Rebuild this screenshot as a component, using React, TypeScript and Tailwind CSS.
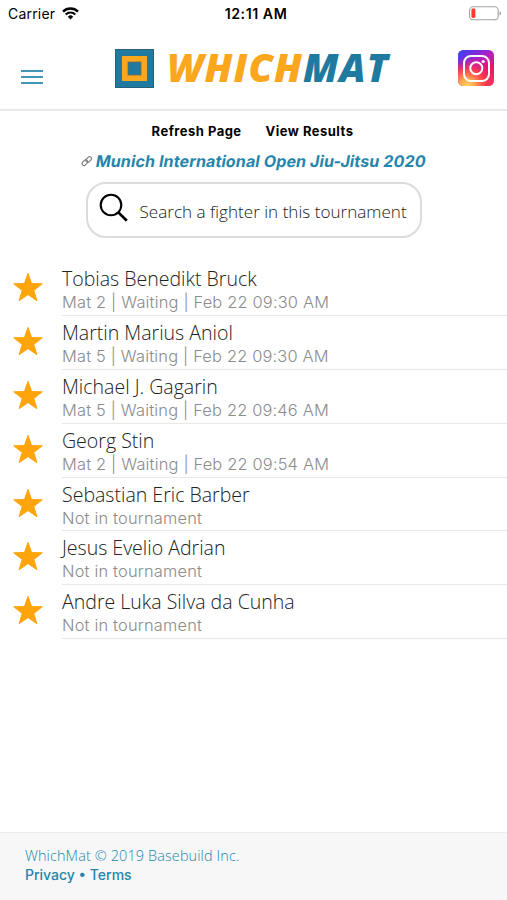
import { clsx } from "clsx";

interface Fighter {
  name: string;
  status: string;
}

const fighters: Fighter[] = [
  { name: "Tobias Benedikt Bruck", status: "Mat 2 | Waiting | Feb 22 09:30 AM" },
  { name: "Martin Marius Aniol", status: "Mat 5 | Waiting | Feb 22 09:30 AM" },
  { name: "Michael J. Gagarin", status: "Mat 5 | Waiting | Feb 22 09:46 AM" },
  { name: "Georg Stin", status: "Mat 2 | Waiting | Feb 22 09:54 AM" },
  { name: "Sebastian Eric Barber", status: "Not in tournament" },
  { name: "Jesus Evelio Adrian", status: "Not in tournament" },
  { name: "Andre Luka Silva da Cunha", status: "Not in tournament" },
];

const inter = "font-['Inter',sans-serif]";
const openSans = "font-['Open_Sans',sans-serif]";

function WifiIcon() {
  return (
    <svg className="ml-[7px] h-[13px] w-[17px]" viewBox="0 0 17 13" fill="none">
      <path d="M1 4.6a10.6 10.6 0 0 1 15 0" stroke="#000" strokeWidth="2.3" />
      <path d="M3.7 7.5a6.8 6.8 0 0 1 9.6 0" stroke="#000" strokeWidth="2.1" />
      <path d="M8.5 12.4 5.8 9.7a3.8 3.8 0 0 1 5.4 0Z" fill="#000" />
    </svg>
  );
}

function BatteryIcon() {
  return (
    <svg className="h-[15px] w-[33px]" viewBox="0 0 33 15" fill="none">
      <rect x="0.6" y="0.8" width="28.6" height="13" rx="3.6" stroke="#a3a3a3" strokeWidth="1.1" />
      <rect x="2.4" y="2.6" width="4" height="9.4" rx="1.4" fill="#fb3b30" />
      <path d="M30.6 5.2v4.2c.9-.3 1.5-1.1 1.5-2.1s-.6-1.8-1.5-2.1Z" fill="#999" />
    </svg>
  );
}

function StatusBar() {
  return (
    <div className={clsx(inter, "flex h-[27px] items-center pr-[5px] pl-2 text-black")}>
      <div className="flex flex-1 items-center">
        <span className="text-[14px] tracking-[0.2px]">Carrier</span>
        <WifiIcon />
      </div>
      <span className="pl-[2px] text-[14.2px] font-semibold tracking-[0.55px]">12:11 AM</span>
      <div className="flex flex-1 justify-end">
        <BatteryIcon />
      </div>
    </div>
  );
}

function Logo() {
  return (
    <div className="flex items-center">
      <svg className="h-[39px] w-[39px]" viewBox="0 0 39 39">
        <rect x="0.5" y="0.5" width="38" height="38" fill="#20799e" stroke="#28617a" />
        <rect x="7" y="7" width="25" height="25" fill="#faa71e" />
        <rect x="13" y="13" width="13" height="13" fill="#20799e" stroke="#786b44" strokeWidth="0.8" />
      </svg>
      <span
        className={clsx(
          openSans,
          "-mt-[3px] ml-[13px] text-[39px] leading-[39px] font-extrabold whitespace-nowrap italic",
        )}
      >
        <span className="tracking-[1.1px] text-[#faa71e]">WHICH</span>
        <span className="tracking-[0.8px] text-[#20799e]">MAT</span>
      </span>
    </div>
  );
}

function InstagramIcon() {
  return (
    <svg className="h-[36px] w-[36px]" viewBox="0 0 36 36" fill="none">
      <defs>
        <linearGradient id="ig-base" x1="12" y1="0" x2="30" y2="36" gradientUnits="userSpaceOnUse">
          <stop offset="0" stopColor="#5b35e8" />
          <stop offset="0.3" stopColor="#b01fc4" />
          <stop offset="0.65" stopColor="#f0145f" />
          <stop offset="1" stopColor="#fb3158" />
        </linearGradient>
        <radialGradient id="ig-warm" cx="9" cy="37" r="31" gradientUnits="userSpaceOnUse">
          <stop offset="0" stopColor="#ffd667" />
          <stop offset="0.25" stopColor="#ffab4e" />
          <stop offset="0.6" stopColor="#fd3d4d" stopOpacity="0.85" />
          <stop offset="1" stopColor="#e01f7c" stopOpacity="0" />
        </radialGradient>
        <radialGradient id="ig-cool" cx="0" cy="0" r="20" gradientUnits="userSpaceOnUse">
          <stop offset="0" stopColor="#3547f0" />
          <stop offset="1" stopColor="#7a2be0" stopOpacity="0" />
        </radialGradient>
      </defs>
      <rect width="36" height="36" rx="5.5" fill="url(#ig-base)" />
      <rect width="36" height="36" rx="5.5" fill="url(#ig-warm)" />
      <rect width="36" height="36" rx="5.5" fill="url(#ig-cool)" />
      <rect x="6" y="6" width="25" height="25" rx="7" stroke="#fff" strokeWidth="2" />
      <circle cx="18.3" cy="18.3" r="6" stroke="#fff" strokeWidth="2" />
      <circle cx="25.2" cy="11.5" r="1.6" fill="#fff" />
    </svg>
  );
}

function Header() {
  return (
    <header className="flex h-[84px] items-center border-b-2 border-[#e9e9e9] pr-[13px] pl-[21px]">
      <button className="mt-[17px] flex w-[22px] flex-col gap-[4px]">
        <span className="h-[2px] bg-[#4595b8]" />
        <span className="h-[2px] bg-[#4595b8]" />
        <span className="h-[2px] bg-[#4595b8]" />
      </button>
      <div className="ml-[72px] flex-1">
        <Logo />
      </div>
      <InstagramIcon />
    </header>
  );
}

function LinkIcon() {
  return (
    <svg className="mr-[3px] h-[12px] w-[12px]" viewBox="0 0 12 12" fill="none" stroke="#777" strokeWidth="1.1">
      <rect x="-3.2" y="-1.9" width="6.4" height="3.8" rx="1.9" transform="translate(3.9 7.7) rotate(-48)" />
      <rect x="-3.2" y="-1.9" width="6.4" height="3.8" rx="1.9" transform="translate(7.7 4.5) rotate(-48)" />
    </svg>
  );
}

function SearchBox() {
  return (
    <div className="mx-auto mt-[10px] flex h-[56px] w-[336px] items-center rounded-[20px] border-2 border-[#dcdcdc] pl-[11px]">
      <svg className="-mt-[4px] h-[30px] w-[30px]" viewBox="0 0 30 30" fill="none" stroke="#000">
        <circle cx="12" cy="12" r="10.3" strokeWidth="2.1" />
        <path d="m19.6 19.6 8.2 8.2" strokeWidth="2.7" />
      </svg>
      <span className={clsx(openSans, "mt-[3px] ml-[11px] text-[17.1px] font-light whitespace-nowrap text-[#222]")}>
        Search a fighter in this tournament
      </span>
    </div>
  );
}

function FighterRow({ name, status }: Fighter) {
  return (
    <li className="flex h-[53.8px]">
      <div className="w-[62px] pt-[9px] pl-3">
        <svg className="h-[32px] w-[32px]" viewBox="0 0 32 32">
          <path
            d="M16 2.4 19.6 12.6 30.3 12.8 21.8 19.4 24.9 29.7 16 23.6 7.1 29.7 10.2 19.4 1.7 12.8 12.4 12.6Z"
            fill="#ffa40b"
            stroke="#ffa40b"
            strokeWidth="1"
            strokeLinejoin="round"
          />
        </svg>
      </div>
      <div className="flex-1 border-b border-[#e8e8e8] pt-[4px]">
        <h2 className={clsx(openSans, "text-[19.55px] leading-[26px] font-light text-[#222]")}>{name}</h2>
        <p className={clsx(inter, "text-[16.4px] leading-[20px] font-light tracking-[0.19px] text-[#8c8c8c]")}>
          {status}
        </p>
      </div>
    </li>
  );
}

export default function App() {
  return (
    <div className="flex h-[900px] w-[507px] flex-col overflow-hidden bg-white">
      <StatusBar />
      <Header />
      <main className="flex-1">
        <nav
          className={clsx(
            inter,
            "mt-[10px] flex justify-center gap-[24px] pr-[2px] text-[13px] leading-[20px] font-bold tracking-[0.48px] text-black",
          )}
        >
          <a href="#">Refresh Page</a>
          <a href="#">View Results</a>
        </nav>
        <div className="mt-[9px] flex items-center justify-center">
          <LinkIcon />
          <a
            href="#"
            className={clsx(
              inter,
              "-skew-x-10 text-[16px] leading-[22px] font-bold tracking-[0.13px] whitespace-nowrap text-[#2585aa]",
            )}
          >
            Munich International Open Jiu-Jitsu 2020
          </a>
        </div>
        <SearchBox />
        <ul className="mt-[24.4px]">
          {fighters.map((fighter) => (
            <FighterRow key={fighter.name} {...fighter} />
          ))}
        </ul>
      </main>
      <footer className="h-[68px] border-t border-[#ececec] bg-[#f7f7f7] pt-[13px] pl-[25px] text-[#2585aa]">
        <p className={clsx(openSans, "text-[14.4px] leading-[20px] font-light tracking-[0.14px]")}>
          WhichMat © 2019 Basebuild Inc.
        </p>
        <p className={clsx(inter, "text-[14px] leading-[18px] font-medium")}>
          <a href="#">Privacy</a> • <a href="#">Terms</a>
        </p>
      </footer>
    </div>
  );
}
